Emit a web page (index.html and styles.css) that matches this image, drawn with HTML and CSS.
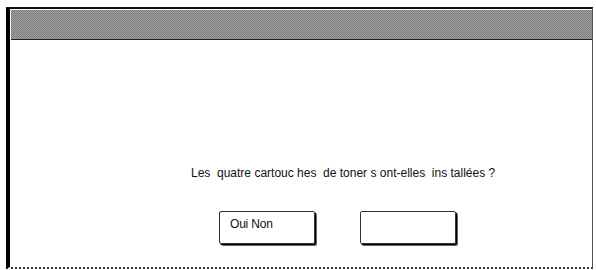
FILE: index.html
```html
<!DOCTYPE html>
<html lang="fr">
<head>
<meta charset="utf-8">
<link rel="stylesheet" href="styles.css">
</head>
<body>
<div class="frame">
  <div class="header"></div>
  <div class="content">
    <p class="question">Les&nbsp; quatre cartouc hes&nbsp; de toner s ont-elles&nbsp; ins tallées ?</p>
    <div class="buttons">
      <div class="btn">Oui Non</div>
      <div class="btn"></div>
    </div>
  </div>
</div>
</body>
</html>
```

FILE: styles.css
```css
html, body {
  margin: 0;
  padding: 0;
  background: #fff;
}
body {
  width: 596px;
  height: 270px;
  overflow: hidden;
  font-family: "Liberation Sans", Arial, sans-serif;
  color: #111;
}
.frame {
  box-sizing: border-box;
  margin: 7px 0 0 6px;
  width: 587px;
  height: 262px;
  border-left: 4px solid #000;
  border-top: 2px solid #111;
  border-right: 1px solid #555;
  border-bottom: 2px dotted #333;
  padding: 1px 0 0 1px;
  display: flex;
  flex-direction: column;
}
.header {
  height: 29px;
  border-bottom: 1px solid #222;
  background-color: #8c8c8c;
  background-image: repeating-conic-gradient(#7c7c7c 0 25%, #a0a0a0 0 50%);
  background-size: 2px 2px;
}
.content {
  display: flex;
  flex-direction: column;
  padding-left: 180px;
}
.question {
  margin: 126px 0 0 0;
  font-size: 12px;
  line-height: 14px;
  letter-spacing: 0;
  white-space: nowrap;
}
.buttons {
  display: flex;
  gap: 45px;
  margin-top: 31px;
  padding-left: 28px;
}
.btn {
  box-sizing: border-box;
  width: 96px;
  height: 33px;
  border: 1px solid #333;
  border-radius: 2px;
  box-shadow: 1px 1px 0 #000, 2px 2px 0 #666;
  padding: 5px 0 0 10px;
  font-size: 12px;
  line-height: 14px;
  letter-spacing: -0.2px;
}
```
